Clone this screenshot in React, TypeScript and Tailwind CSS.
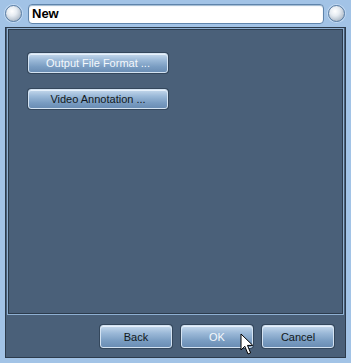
import React from "react";

function Btn({ label, light, className }: { label: string; light?: boolean; className?: string }) {
  return (
    <div
      className={
        "flex items-center justify-center rounded-[3px] border border-[#d4e3f2] bg-[linear-gradient(to_bottom,#c4d8ec_0%,#9ab8d7_35%,#7a9dc2_70%,#6a8db4_100%)] shadow-[0_0_0_1px_#34475c,inset_0_1px_0_#e6f0fa] text-[11px] leading-none pt-[1px] " +
        (light ? "text-[#f4f8fc] " : "text-[#111820] ") +
        (className ?? "")
      }
      style={{ fontFamily: '"Liberation Sans", Arial, sans-serif' }}
    >
      {label}
    </div>
  );
}

function Orb() {
  return (
    <div className="w-[17px] h-[17px] rounded-full border border-[#5a7da3] bg-[radial-gradient(circle_at_40%_35%,#ffffff_0%,#e6ecf2_35%,#a9b6c4_80%,#8d9cae_100%)] shadow-[0_0_0_1px_#c3daf2] shrink-0" />
  );
}

export default function App() {
  return (
    <div className="relative w-[351px] h-[363px] bg-[#a2c3e6] flex flex-col overflow-hidden">
      {/* title bar */}
      <div className="h-[27px] flex items-center pl-[5px] pr-[6px] gap-[4px] shrink-0">
        <Orb />
        <div className="flex-1 h-[20px] rounded-[4px] bg-white border border-[#5f84ab] shadow-[inset_0_1px_1px_#9fb8d0] flex items-center pl-[3px] ml-[2px]">
          <span
            className="text-[13px] font-bold text-black leading-none"
            style={{ fontFamily: '"Liberation Sans", Arial, sans-serif' }}
          >
            New
          </span>
        </div>
        <Orb />
      </div>
      {/* body */}
      <div className="flex-1 ml-[5px] mr-[5px] mb-[5px] bg-[#4a6079] border border-[#2c3b4c] flex flex-col">
        <div className="ml-[1px] mr-[1px] h-[287px] border border-[#8fb0d2] shrink-0">
          <div className="h-full border border-[#2c3b4c] flex flex-col gap-[16px] pt-[23px] pl-[19px]">
            <Btn label="Output File Format ..." light className="w-[140px] h-[20px]" />
            <Btn label="Video Annotation ..." className="w-[140px] h-[20px]" />
          </div>
        </div>
        <div className="flex-1 flex items-center justify-end gap-[9px] pr-[11px] pt-[1px]">
          <Btn label="Back" className="w-[72px] h-[23px]" />
          <Btn label="OK" light className="w-[72px] h-[23px]" />
          <Btn label="Cancel" className="w-[72px] h-[23px]" />
        </div>
      </div>
      {/* cursor */}
      <svg
        className="absolute left-[240px] top-[333px]"
        width="15"
        height="24"
        viewBox="0 0 15 24"
      >
        <path
          d="M1 1 L1 17 L4.8 13.3 L8 21 L10.6 19.9 L7.5 12.4 L12.8 12.4 Z"
          fill="white"
          stroke="black"
          strokeWidth="1"
          strokeLinejoin="miter"
        />
      </svg>
    </div>
  );
}
